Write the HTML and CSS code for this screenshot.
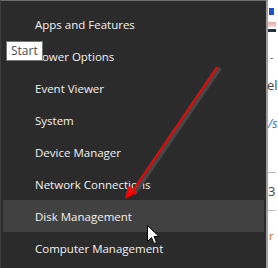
FILE: index.html
```html
<!DOCTYPE html>
<html lang="en">
<head>
    <meta charset="UTF-8">
    <title>Quick Link Menu</title>
    <link rel="stylesheet" href="styles.css">
</head>
<body>
    <div class="screen">
        <div class="menu">
            <div class="menu-item">Apps and Features</div>
            <div class="menu-item">Power Options</div>
            <div class="menu-item">Event Viewer</div>
            <div class="menu-item">System</div>
            <div class="menu-item">Device Manager</div>
            <div class="menu-item">Network Connections</div>
            <div class="menu-item hover">Disk Management</div>
            <div class="menu-item">Computer Management</div>

            <div class="tooltip">Start</div>

            <!-- red arrow pointing at Disk Management -->
            <svg class="arrow" width="268" height="268" viewBox="0 0 268 268">
                <line x1="220" y1="68" x2="134" y2="194" stroke="#474747" stroke-width="4"/>
                <line x1="217" y1="67" x2="131" y2="193" stroke="#ff0000" stroke-width="2"/>
                <polygon points="125,199 128,186 137,192" fill="#ff0000"/>
            </svg>

            <svg class="cursor" width="13" height="20" viewBox="0 0 13 20">
                <path d="M0.5 0.5 L0.5 16.5 L4.5 12.5 L7 18.5 L9.5 17.5 L7 11.5 L12 11.5 Z" fill="#fff" stroke="#000" stroke-width="1"/>
            </svg>
        </div>

        <div class="page">
            <span class="frag icon"></span>
            <span class="frag stripe"></span>
            <span class="frag bar"></span>
            <span class="frag dash">-</span>
            <span class="frag txt-el">el</span>
            <span class="frag txt-s">/s</span>
            <span class="frag rule rule-1"></span>
            <span class="frag txt-3">3</span>
            <span class="frag rule rule-2"></span>
            <span class="frag txt-r">r</span>
        </div>
    </div>
</body>
</html>
```

FILE: styles.css
```css
body {
    margin: 0;
    font-family: "Open Sans", "Noto Sans", sans-serif;
    background: #fff;
}

.screen {
    display: flex;
    width: 278px;
    height: 268px;
    overflow: hidden;
}

.menu {
    position: relative;
    width: 268px;
    height: 268px;
    flex: none;
    background: #2b2b2b;
    border-top: 1px solid #6e6e6e;
    border-left: 1px solid #3d3d3d;
    border-right: 2px solid #a0a0a0;
    box-sizing: border-box;
    padding: 7px 2px 0 2px;
}

.menu-item {
    height: 32px;
    line-height: 33px;
    padding-left: 32px;
    font-size: 11.5px;
    color: #f2f2f2;
    white-space: nowrap;
}

.menu-item.hover {
    background: #414141;
}

.tooltip {
    position: absolute;
    left: 5px;
    top: 40px;
    padding: 0 4px;
    height: 18px;
    line-height: 17px;
    font-size: 12px;
    color: #4c4c4c;
    background: #fff;
    border: 1px solid #767676;
}

.arrow {
    position: absolute;
    left: -1px;
    top: -1px;
}

.cursor {
    position: absolute;
    left: 146px;
    top: 224px;
}

.page {
    position: relative;
    flex: 1;
    background: #fff;
}

.frag {
    position: absolute;
    display: block;
}

.icon {
    left: 1px;
    top: 8px;
    width: 5px;
    height: 7px;
    background: #1c4fc9;
}

.stripe {
    left: 0;
    top: 22px;
    width: 8px;
    height: 5px;
    background: linear-gradient(#e8a4a4, #f3d6d6);
}

.bar {
    left: 0;
    top: 29px;
    width: 8px;
    height: 3px;
    background: #1f2e4a;
}

.dash {
    left: 2px;
    top: 50px;
    font-size: 10px;
    color: #555;
}

.txt-el {
    left: -1px;
    top: 76px;
    font-size: 13px;
    color: #444;
}

.txt-s {
    left: 0;
    top: 115px;
    font-size: 12px;
    font-style: italic;
    color: #1a6ed8;
}

.rule {
    left: 0;
    width: 8px;
    height: 1px;
    background: #b8b8b8;
}

.rule-1 {
    top: 172px;
}

.rule-2 {
    top: 210px;
}

.txt-3 {
    left: 0;
    top: 182px;
    font-size: 13px;
    color: #444;
}

.txt-r {
    left: 1px;
    top: 228px;
    font-size: 11px;
    color: #c46a10;
}
```
